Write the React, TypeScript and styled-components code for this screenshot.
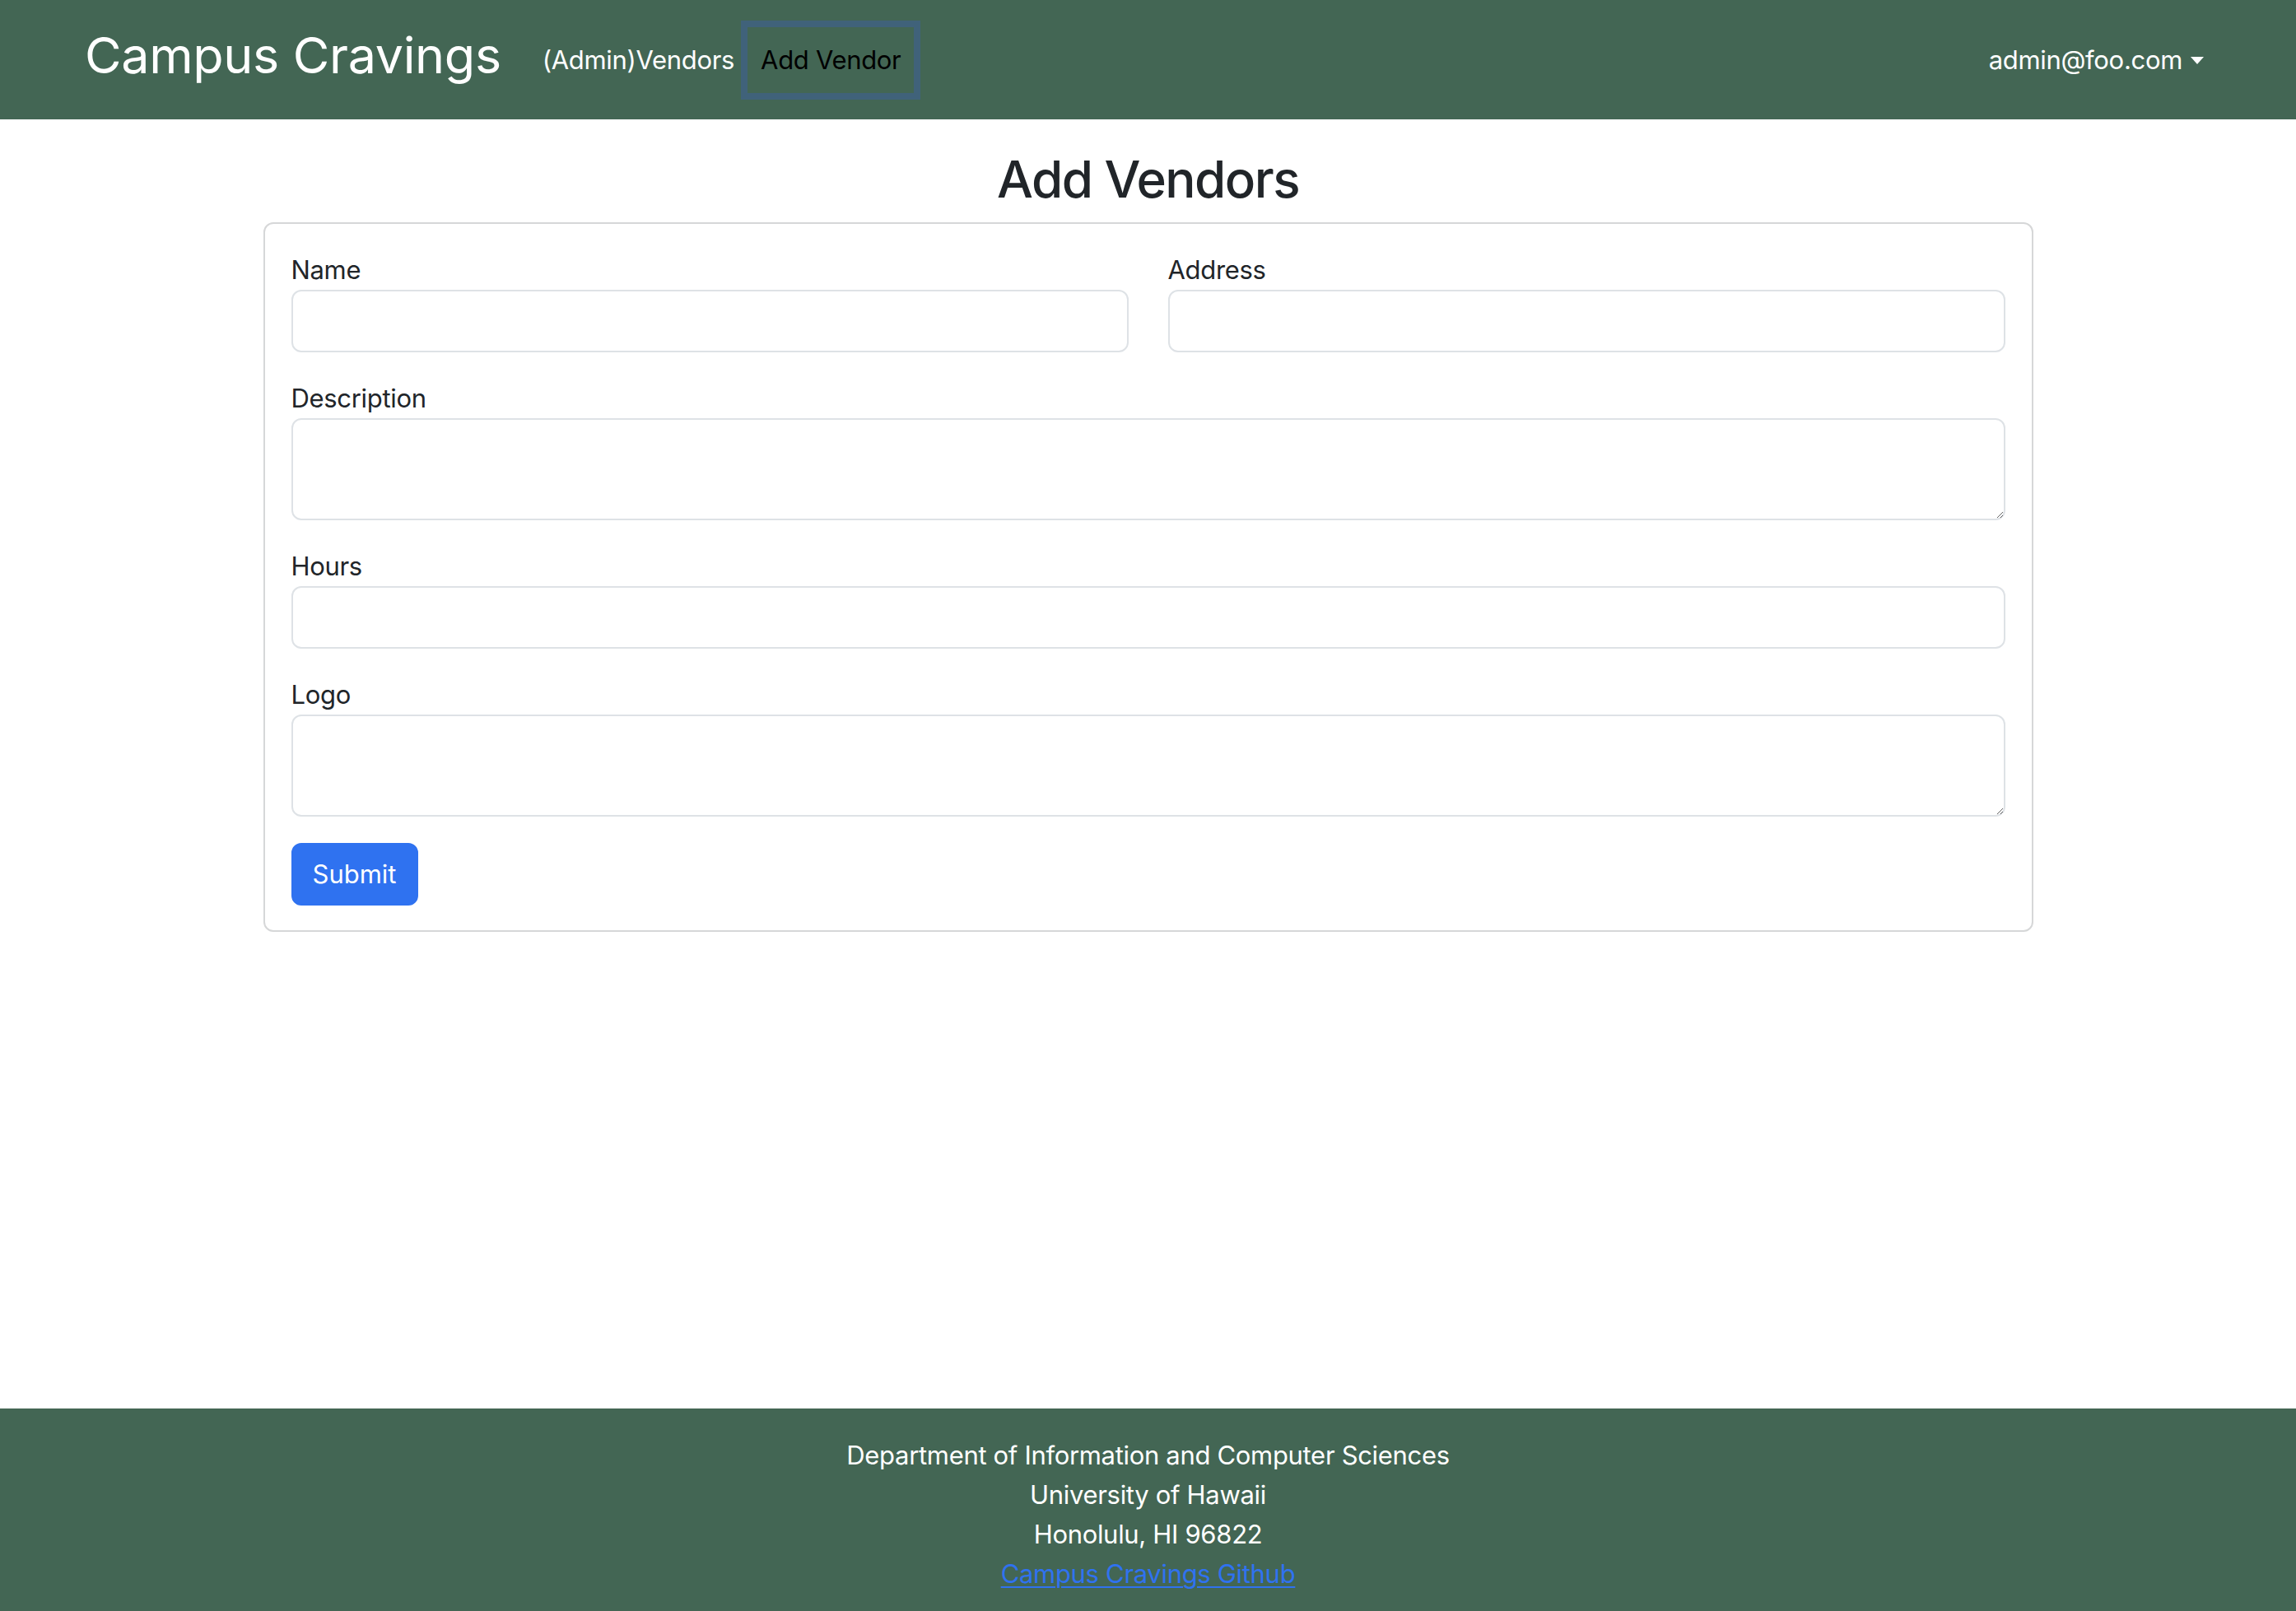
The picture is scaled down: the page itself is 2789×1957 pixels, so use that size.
import React from "react";
import styled, { createGlobalStyle } from "styled-components";

const GlobalStyle = createGlobalStyle`
  html, body {
    margin: 0;
    padding: 0;
    background: #ffffff;
  }
  body {
    font-family: Inter, "Liberation Sans", Arial, sans-serif;
    letter-spacing: -0.02em;
    color: #212529;
  }
  *, *::before, *::after { box-sizing: border-box; }
`;

const Page = styled.div`
  min-height: 100vh;
  display: flex;
  flex-direction: column;
`;

const NavBar = styled.nav`
  height: 145px;
  background: #436654;
  display: flex;
  align-items: center;
  padding: 0 96px 0 103px;
`;

const Brand = styled.a`
  font-size: 61px;
  font-weight: 400;
  line-height: 1.2;
  color: #ffffff;
  text-decoration: none;
  margin-right: 34px;
  margin-bottom: 10px;
  white-space: nowrap;
`;

const NavList = styled.div`
  display: flex;
  align-items: center;
  flex: 1;
`;

const NavLink = styled.a<{ $active?: boolean }>`
  font-size: 31px;
  line-height: 48px;
  padding: 16px;
  color: ${(p) => (p.$active ? "#000000" : "#ffffff")};
  text-decoration: none;
  white-space: nowrap;
  box-shadow: ${(p) => (p.$active ? "0 0 0 8px #40627a" : "none")};
`;

const UserMenu = styled.a`
  font-size: 31px;
  line-height: 48px;
  padding: 16px;
  color: #ffffff;
  text-decoration: none;
  display: flex;
  align-items: center;
  white-space: nowrap;

  &::after {
    content: "";
    display: inline-block;
    margin-left: 10px;
    margin-top: 2px;
    border-top: 9px solid #ffffff;
    border-left: 8px solid transparent;
    border-right: 8px solid transparent;
    border-bottom: 0;
  }
`;

const Main = styled.main`
  flex: 1;
  display: flex;
  flex-direction: column;
  align-items: center;
  padding-top: 34px;
`;

const Title = styled.h2`
  margin: 0 0 14px;
  font-size: 62px;
  font-weight: 500;
  line-height: 77px;
  letter-spacing: -0.025em;
  color: #212529;
  text-align: center;
`;

const Card = styled.form`
  width: 2150px;
  border: 2px solid #d6d7d8;
  border-radius: 12px;
  padding: 32px 32px 30px;
  display: flex;
  flex-direction: column;
  gap: 32px;
`;

const TwoCol = styled.div`
  display: grid;
  grid-template-columns: 1fr 1fr;
  gap: 48px;
`;

const Field = styled.div`
  display: flex;
  flex-direction: column;
`;

const Label = styled.label`
  font-size: 31px;
  line-height: 48px;
  color: #212529;
`;

const Input = styled.input`
  height: 76px;
  width: 100%;
  border: 2px solid #dee2e6;
  border-radius: 12px;
  padding: 12px 24px;
  font: inherit;
  font-size: 31px;
  background: #ffffff;
  outline: none;
`;

const TextArea = styled.textarea`
  height: 124px;
  width: 100%;
  border: 2px solid #dee2e6;
  border-radius: 12px;
  padding: 12px 24px;
  font: inherit;
  font-size: 31px;
  background: #ffffff;
  resize: vertical;
  outline: none;
  display: block;
`;

const SubmitButton = styled.button`
  align-self: flex-start;
  height: 76px;
  padding: 0 24px;
  border: 2px solid #2f72f0;
  border-radius: 12px;
  background: #2f72f0;
  color: #ffffff;
  font: inherit;
  font-size: 31px;
  line-height: 48px;
  cursor: pointer;
`;

const Footer = styled.footer`
  background: #436654;
  color: #ffffff;
  text-align: center;
  padding: 33px 0 21px;
  font-size: 31px;
  line-height: 48px;
`;

const FooterLine = styled.div``;

const FooterLink = styled.a`
  color: #2f72f0;
  text-decoration: underline;
  text-underline-offset: 4px;
  text-decoration-thickness: 2px;
`;

export default function App() {
  return (
    <Page>
      <GlobalStyle />
      <NavBar>
        <Brand href="#">Campus Cravings</Brand>
        <NavList>
          <NavLink href="#">(Admin)Vendors</NavLink>
          <NavLink href="#" $active>
            Add Vendor
          </NavLink>
        </NavList>
        <UserMenu href="#">admin@foo.com</UserMenu>
      </NavBar>
      <Main>
        <Title>Add Vendors</Title>
        <Card onSubmit={(e) => e.preventDefault()}>
          <TwoCol>
            <Field>
              <Label>Name</Label>
              <Input type="text" />
            </Field>
            <Field>
              <Label>Address</Label>
              <Input type="text" />
            </Field>
          </TwoCol>
          <Field>
            <Label>Description</Label>
            <TextArea />
          </Field>
          <Field>
            <Label>Hours</Label>
            <Input type="text" />
          </Field>
          <Field>
            <Label>Logo</Label>
            <TextArea />
          </Field>
          <SubmitButton type="submit">Submit</SubmitButton>
        </Card>
      </Main>
      <Footer>
        <FooterLine>Department of Information and Computer Sciences</FooterLine>
        <FooterLine>University of Hawaii</FooterLine>
        <FooterLine>Honolulu, HI 96822</FooterLine>
        <FooterLine>
          <FooterLink href="#">Campus Cravings Github</FooterLink>
        </FooterLine>
      </Footer>
    </Page>
  );
}
